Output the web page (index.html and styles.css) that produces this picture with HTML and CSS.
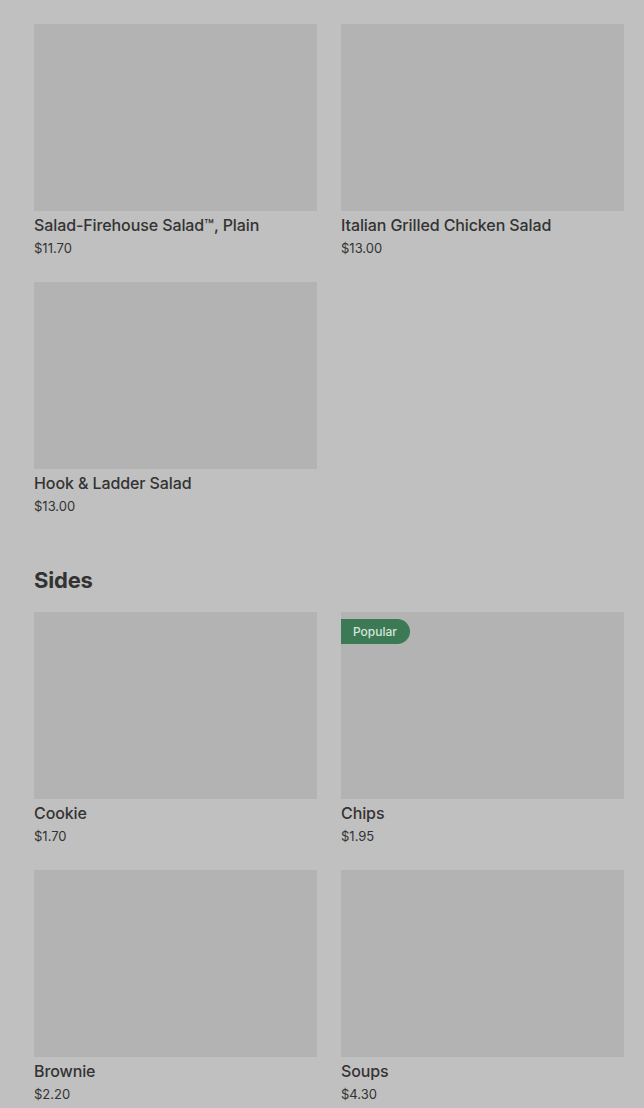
FILE: index.html
```html
<!DOCTYPE html>
<html lang="en">
<head>
<meta charset="utf-8">
<link rel="stylesheet" href="styles.css">
</head>
<body>
<main class="menu">
  <section class="grid">
    <div class="card">
      <div class="thumb"></div>
      <div class="title">Salad-Firehouse Salad™, Plain</div>
      <div class="price">$11.70</div>
    </div>
    <div class="card">
      <div class="thumb"></div>
      <div class="title">Italian Grilled Chicken Salad</div>
      <div class="price">$13.00</div>
    </div>
    <div class="card">
      <div class="thumb"></div>
      <div class="title">Hook &amp; Ladder Salad</div>
      <div class="price">$13.00</div>
    </div>
  </section>
  <h2 class="heading">Sides</h2>
  <section class="grid">
    <div class="card">
      <div class="thumb"></div>
      <div class="title">Cookie</div>
      <div class="price">$1.70</div>
    </div>
    <div class="card">
      <div class="thumb"><span class="badge">Popular</span></div>
      <div class="title">Chips</div>
      <div class="price">$1.95</div>
    </div>
    <div class="card">
      <div class="thumb"></div>
      <div class="title">Brownie</div>
      <div class="price">$2.20</div>
    </div>
    <div class="card">
      <div class="thumb"></div>
      <div class="title">Soups</div>
      <div class="price">$4.30</div>
    </div>
  </section>
</main>
</body>
</html>
```
FILE: styles.css
```css
html, body {
  margin: 0;
  padding: 0;
  background: #c0c0c0;
}
body {
  font-family: Inter, "Noto Sans", "Liberation Sans", sans-serif;
  color: #333333;
  overflow: hidden;
}
.menu {
  padding: 24px 20px 0 34px;
}
.grid {
  display: grid;
  grid-template-columns: 283px 283px;
  column-gap: 24px;
  row-gap: 24px;
}
.card {
  display: flex;
  flex-direction: column;
}
.thumb {
  position: relative;
  height: 187px;
  background: #b3b3b3;
}
.title {
  margin-top: 3px;
  font-size: 16px;
  line-height: 22px;
  font-weight: 500;
  letter-spacing: -0.1px;
}
.price {
  margin-top: 2px;
  font-size: 13px;
  line-height: 20px;
  font-weight: 400;
  letter-spacing: 0;
}
.heading {
  margin: 48px 0 16px;
  font-size: 22px;
  line-height: 32px;
  font-weight: 700;
  letter-spacing: -0.2px;
}
.badge {
  position: absolute;
  left: 0;
  top: 7px;
  height: 25px;
  line-height: 25px;
  padding: 0 13px 0 12px;
  background: #3c7a55;
  color: #d6e6da;
  font-size: 12px;
  font-weight: 500;
  border-radius: 0 13px 13px 0;
}
```
